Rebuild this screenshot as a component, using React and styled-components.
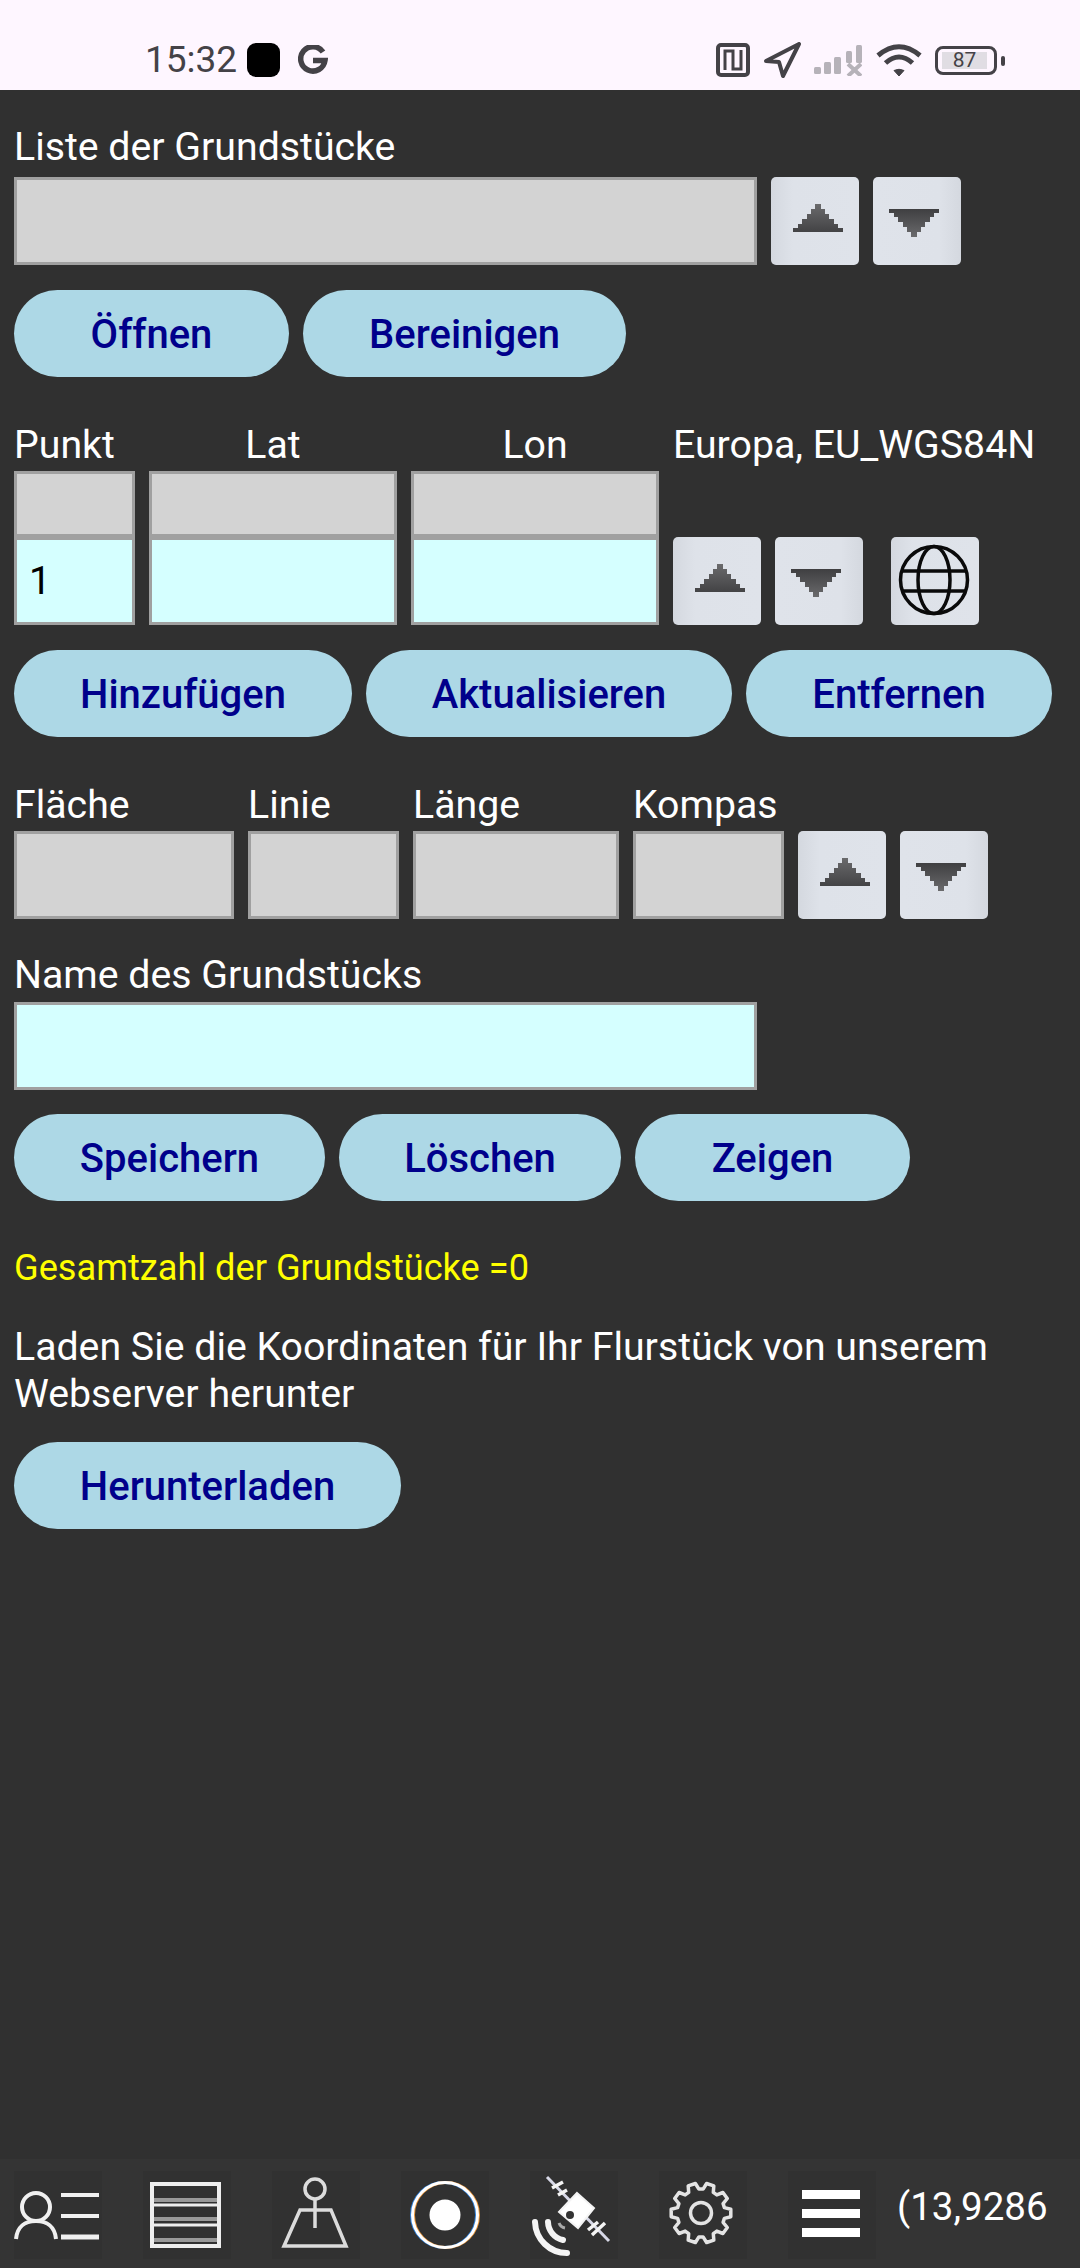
import React from 'react';
import styled, { createGlobalStyle } from 'styled-components';

const GlobalStyle = createGlobalStyle`
  html, body {
    margin: 0;
    padding: 0;
    background-color: #303030;
  }
  * {
    box-sizing: border-box;
  }
`;

const Page = styled.div`
  display: flex;
  flex-direction: column;
  width: 1080px;
  height: 2268px;
  overflow: hidden;
  background-color: #303030;
  color: #fff;
  font-family: Roboto, "Noto Sans", sans-serif;
`;

const StatusBar = styled.div`
  display: flex;
  align-items: center;
  height: 90px;
  padding: 30px 83px 0 145px;
  background-color: #fef6ff;
  color: #444247;
`;

const Clock = styled.span`
  font-size: 37px;
  line-height: 40px;
  width: 102px;
`;

const BlackDot = styled.span`
  width: 33px;
  height: 34px;
  border-radius: 9px;
  background-color: #000;
`;

const StatusIcons = styled.div`
  display: flex;
  align-items: center;
  gap: 13.5px;
  margin-left: auto;
`;

const Battery = styled.div`
  position: relative;
  display: flex;
  align-items: center;
  width: 62px;
  height: 29px;
  padding: 3px 7px 3px 4px;
  border: 3px solid #444247;
  border-radius: 8px;

  &::after {
    content: '';
    position: absolute;
    right: -11px;
    top: 7px;
    width: 4px;
    height: 10px;
    border-radius: 2px;
    background-color: #444247;
  }
`;

const BatteryLevel = styled.span`
  flex: 1;
  height: 17px;
  background-color: #e0dde3;
  font-size: 21px;
  line-height: 17px;
  text-align: center;
`;

const Main = styled.main`
  flex: 1;
  padding: 35px 14px 0;
`;

const Label = styled.div`
  height: 44px;
  font-size: 39.25px;
  line-height: 44px;
  margin-top: ${p => p.$top || 0}px;
  margin-bottom: ${p => p.$bottom || 0}px;
  text-align: ${p => (p.$center ? 'center' : 'left')};
  white-space: nowrap;
`;

const Row = styled.div`
  display: flex;
  align-items: flex-start;
  gap: 14px;
  margin-top: ${p => p.$top || 0}px;
`;

const Column = styled.div`
  display: flex;
  flex-direction: column;
  width: ${p => p.$width}px;
`;

const Field = styled.input`
  display: block;
  width: ${p => (p.$width ? `${p.$width}px` : '100%')};
  height: ${p => p.$height || 88}px;
  padding: 0 0 0 12px;
  border: 3px solid #a0a0a0;
  border-radius: 0;
  outline: none;
  background-color: ${p => (p.$editable ? '#d5ffff' : '#d3d3d3')};
  color: #000;
  font-family: inherit;
  font-size: 39px;
`;

const SpinButton = styled.button`
  display: flex;
  align-items: center;
  justify-content: center;
  flex: none;
  width: 88px;
  height: 88px;
  margin-left: ${p => p.$gap || 0}px;
  padding: 0;
  border: none;
  border-radius: 5px;
  background: linear-gradient(${p => (p.$flip ? '270deg' : '90deg')}, #d4d8df 0%, #dee2e9 25%, #dfe3ea 100%);
`;

const SpinRow = styled.div`
  display: flex;
  gap: 14px;
  margin-top: ${p => p.$top}px;
`;

const ActionButton = styled.button`
  flex: none;
  width: ${p => p.$width}px;
  height: 87px;
  padding: 2px 0 0;
  border: none;
  border-radius: 44px;
  background-color: #add8e6;
  color: #00008b;
  font-family: inherit;
  font-size: 40px;
  font-weight: 500;
`;

const Total = styled.div`
  height: 44px;
  margin-top: 45px;
  color: #ffff00;
  font-size: 36.2px;
  line-height: 44px;
`;

const Hint = styled.p`
  margin: 34px 0 24px;
  font-size: 39.25px;
  line-height: 47px;
`;

const BottomBar = styled.nav`
  display: flex;
  gap: 41px;
  height: 109px;
  padding: 12px 0 0 14px;
  background-color: #343434;
`;

const Tile = styled.div`
  flex: none;
  width: 88px;
  height: 88px;
  background-color: #313131;
`;

const Coordinates = styled.span`
  margin: 13px 0 0 -20px;
  font-size: 38.5px;
  line-height: 46px;
  white-space: nowrap;
`;

const IconSvg = styled.svg`
  display: block;
  filter: ${p => (p.$soft ? 'blur(0.5px)' : 'none')};
`;

// stepped triangle, the source bitmap is pixelated
const stepPoints = (flip) => {
  const left = [];
  const right = [];
  let y = 0;
  [[22, 28, 5], [18, 32, 5], [14, 36, 5], [9, 41, 5], [5, 45, 4], [0, 50, 4]].forEach(([a, b, h]) => {
    left.push([a, y], [a, y + h]);
    right.push([b, y], [b, y + h]);
    y += h;
  });
  return left.reverse().concat(right).map(([x, py]) => `${x},${flip ? 28 - py : py}`).join(' ');
};

const ArrowUp = () => (
  <svg width="88" height="88" viewBox="0 0 88 88" shapeRendering="crispEdges">
    <defs>
      <linearGradient id="arrowUpFill" x1="0" y1="0" x2="0" y2="1">
        <stop offset="0" stopColor="#6a6a6c" />
        <stop offset="1" stopColor="#434345" />
      </linearGradient>
    </defs>
    <polygon transform="translate(22 27)" points={stepPoints(false)} fill="url(#arrowUpFill)" />
  </svg>
);

const ArrowDown = () => (
  <svg width="88" height="88" viewBox="0 0 88 88" shapeRendering="crispEdges">
    <defs>
      <linearGradient id="arrowDownFill" x1="0" y1="0" x2="0" y2="1">
        <stop offset="0" stopColor="#3f3f41" />
        <stop offset="1" stopColor="#6a6a6c" />
      </linearGradient>
    </defs>
    <polygon transform="translate(16 32)" points={stepPoints(true)} fill="url(#arrowDownFill)" />
  </svg>
);

const GlobeIcon = () => (
  <IconSvg $soft width="88" height="88" viewBox="0 0 88 88" fill="none" stroke="#0a0a0a" strokeWidth="3.5">
    <circle cx="43" cy="43" r="33.5" />
    <ellipse cx="43" cy="43" rx="16" ry="33.5" />
    <path d="M11 34h64M11 54h64" />
  </IconSvg>
);

const NfcIcon = () => (
  <svg width="34" height="34" viewBox="0 0 34 34" fill="none" stroke="#444247" strokeWidth="3">
    <rect x="2" y="2" width="30" height="30" rx="3" strokeWidth="4" />
    <path d="M9 27V8h8v14M25 7v19h-8V13" />
  </svg>
);

const NavIcon = () => (
  <svg width="37" height="36" viewBox="0 0 37 36" fill="none" stroke="#444247" strokeWidth="4" strokeLinejoin="round">
    <polygon points="2,19 35,2 19,34 15,20" />
  </svg>
);

const SignalIcon = () => (
  <svg width="48" height="32" viewBox="0 0 48 32" fill="#b6b2b9">
    <rect x="0" y="23" width="7" height="7" rx="1.5" />
    <rect x="10" y="18" width="7" height="12" rx="1.5" />
    <rect x="20" y="13" width="7" height="17" rx="1.5" />
    <rect x="32" y="7" width="6" height="12" rx="1.5" />
    <rect x="42" y="1" width="6" height="18" rx="1.5" />
    <path d="M34 20l13 12M47 20L34 32" stroke="#b6b2b9" strokeWidth="4" fill="none" />
  </svg>
);

const WifiIcon = () => (
  <svg width="46" height="34" viewBox="0 0 46 34" fill="none" stroke="#444247" strokeWidth="5">
    <path d="M2 12.5Q23 -5 44 12.5" />
    <path d="M9.5 20Q23 8 36.5 20" />
    <path d="M18 27.5Q23 25 28 27.5L23 33Z" fill="#444247" strokeWidth="1" strokeLinejoin="round" />
  </svg>
);

const GoogleMark = () => (
  <svg width="30" height="30" viewBox="0 0 30 30" fill="none" stroke="#444247" strokeWidth="5.5" style={{ marginLeft: 18 }}>
    <path d="M25 7A12.2 12.2 0 1 0 27 15.5H15" />
  </svg>
);

const PersonListIcon = () => (
  <IconSvg $soft width="88" height="88" viewBox="0 0 88 88" fill="none" stroke="#f0f0f0" strokeWidth="4">
    <circle cx="22" cy="36" r="14" />
    <path d="M2 68C3 56 11 50 22 50S41 56 42 68" />
    <path d="M47 24h38M47 45h38" />
    <path d="M47 66h38" strokeWidth="5" />
  </IconSvg>
);

const LayersIcon = () => (
  <IconSvg $soft width="88" height="88" viewBox="0 0 88 88" fill="none">
    <path d="M10 29h65M10 48h65M10 69h65" stroke="#999" strokeWidth="4" />
    <path d="M10 34h65M10 54h65" stroke="#eee" strokeWidth="3" />
    <rect x="9" y="13" width="67" height="62" stroke="#eee" strokeWidth="4" />
  </IconSvg>
);

const SurveyIcon = () => (
  <IconSvg $soft width="88" height="88" viewBox="0 0 88 88" fill="none" stroke="#dcdcdc" strokeWidth="3.5">
    <circle cx="43" cy="18" r="10" />
    <path d="M43 28v29" />
    <path d="M12 75L28 39h31l15 36Z" />
  </IconSvg>
);

const RadioIcon = () => (
  <IconSvg $soft width="88" height="88" viewBox="0 0 88 88" fill="none" strokeWidth="3">
    <circle cx="43" cy="44" r="32.5" stroke="#2f7fd8" />
    <circle cx="45" cy="44" r="32.5" stroke="#e8963c" />
    <circle cx="44" cy="44" r="32.5" stroke="#fff" />
    <circle cx="44" cy="44" r="15.5" fill="#fff" stroke="none" />
  </IconSvg>
);

const SatelliteIcon = () => (
  <IconSvg $soft width="88" height="88" viewBox="0 0 88 88" fill="none" stroke="#f4f4f4">
    <path d="M17 6L79 70" strokeWidth="3" stroke="#d8d9e8" />
    <path d="M22 17L33 11M28 24L37 19M62 64L75 52M58 59L68 51" strokeWidth="3.5" />
    <path d="M47 22L64 37 48 57 29 41Z" fill="#fff" strokeWidth="2" />
    <circle cx="40" cy="44" r="4" fill="#333" stroke="none" />
    <path d="M5 51A32 32 0 0 0 37 82M18 51A19 19 0 0 0 33 69" strokeWidth="6" strokeLinecap="round" />
    <path d="M29 52A8 8 0 0 0 35 57" strokeWidth="3" stroke="#aaa" />
  </IconSvg>
);

// gear outline with evenly spaced teeth
const gearPath = (teeth, cx, cy, outer, inner) => {
  const parts = [];
  const step = (Math.PI * 2) / teeth;
  for (let i = 0; i < teeth; i++) {
    const a = i * step - Math.PI / 2 + step / 2;
    const pt = (r, o) => `${(cx + r * Math.cos(a + o)).toFixed(1)} ${(cy + r * Math.sin(a + o)).toFixed(1)}`;
    parts.push(`${i === 0 ? 'M' : 'L'}${pt(inner, -step * 0.36)}`);
    parts.push(`L${pt(outer, -step * 0.2)}`);
    parts.push(`L${pt(outer, step * 0.2)}`);
    parts.push(`L${pt(inner, step * 0.36)}`);
  }
  return `${parts.join(' ')}Z`;
};

const GearIcon = () => (
  <IconSvg $soft width="88" height="88" viewBox="0 0 88 88" fill="none" stroke="#e4e4e4" strokeWidth="3.5" strokeLinejoin="round">
    <path d={gearPath(10, 42, 42, 30, 24)} />
    <circle cx="42" cy="42" r="10.5" />
  </IconSvg>
);

const MenuIcon = () => (
  <IconSvg width="88" height="88" viewBox="0 0 88 88" fill="#fff">
    <rect x="14" y="19" width="58" height="9" />
    <rect x="14" y="38" width="58" height="9" />
    <rect x="14" y="57" width="58" height="9" />
  </IconSvg>
);

const App = () => {
  return (
    <Page>
      <GlobalStyle />
      <StatusBar>
        <Clock>15:32</Clock>
        <BlackDot />
        <GoogleMark />
        <StatusIcons>
          <NfcIcon />
          <NavIcon />
          <SignalIcon />
          <WifiIcon />
          <Battery>
            <BatteryLevel>87</BatteryLevel>
          </Battery>
        </StatusIcons>
      </StatusBar>

      <Main>
        <Label $bottom={8}>Liste der Grundstücke</Label>
        <Row>
          <Field $width={743} readOnly />
          <SpinButton><ArrowUp /></SpinButton>
          <SpinButton $flip><ArrowDown /></SpinButton>
        </Row>
        <Row $top={25}>
          <ActionButton $width={275}>Öffnen</ActionButton>
          <ActionButton $width={323}>Bereinigen</ActionButton>
        </Row>

        <Row $top={46}>
          <Column $width={121}>
            <Label $bottom={4}>Punkt</Label>
            <Field $height={66} readOnly />
            <Field $editable readOnly value="1" />
          </Column>
          <Column $width={248}>
            <Label $center $bottom={4}>Lat</Label>
            <Field $height={66} readOnly />
            <Field $editable readOnly />
          </Column>
          <Column $width={248}>
            <Label $center $bottom={4}>Lon</Label>
            <Field $height={66} readOnly />
            <Field $editable readOnly />
          </Column>
          <Column $width={380}>
            <Label $bottom={4}>Europa, EU_WGS84N</Label>
            <SpinRow $top={66}>
              <SpinButton><ArrowUp /></SpinButton>
              <SpinButton $flip><ArrowDown /></SpinButton>
              <SpinButton $gap={14}><GlobeIcon /></SpinButton>
            </SpinRow>
          </Column>
        </Row>
        <Row $top={25}>
          <ActionButton $width={338}>Hinzufügen</ActionButton>
          <ActionButton $width={366}>Aktualisieren</ActionButton>
          <ActionButton $width={306}>Entfernen</ActionButton>
        </Row>

        <Row $top={46}>
          <Column $width={220}>
            <Label $bottom={4}>Fläche</Label>
            <Field readOnly />
          </Column>
          <Column $width={151}>
            <Label $bottom={4}>Linie</Label>
            <Field readOnly />
          </Column>
          <Column $width={206}>
            <Label $bottom={4}>Länge</Label>
            <Field readOnly />
          </Column>
          <Column $width={151}>
            <Label $bottom={4}>Kompas</Label>
            <Field readOnly />
          </Column>
          <SpinRow $top={48}>
            <SpinButton><ArrowUp /></SpinButton>
            <SpinButton $flip><ArrowDown /></SpinButton>
          </SpinRow>
        </Row>

        <Label $top={34} $bottom={5}>Name des Grundstücks</Label>
        <Field $width={743} $editable readOnly />
        <Row $top={24}>
          <ActionButton $width={311}>Speichern</ActionButton>
          <ActionButton $width={282}>Löschen</ActionButton>
          <ActionButton $width={275}>Zeigen</ActionButton>
        </Row>

        <Total>Gesamtzahl der Grundstücke =0</Total>
        <Hint>Laden Sie die Koordinaten für Ihr Flurstück von unserem<br />Webserver herunter</Hint>
        <ActionButton $width={387}>Herunterladen</ActionButton>
      </Main>

      <BottomBar>
        <Tile><PersonListIcon /></Tile>
        <Tile><LayersIcon /></Tile>
        <Tile><SurveyIcon /></Tile>
        <Tile><RadioIcon /></Tile>
        <Tile><SatelliteIcon /></Tile>
        <Tile><GearIcon /></Tile>
        <Tile><MenuIcon /></Tile>
        <Coordinates>(13,9286</Coordinates>
      </BottomBar>
    </Page>
  );
};

export default App;
